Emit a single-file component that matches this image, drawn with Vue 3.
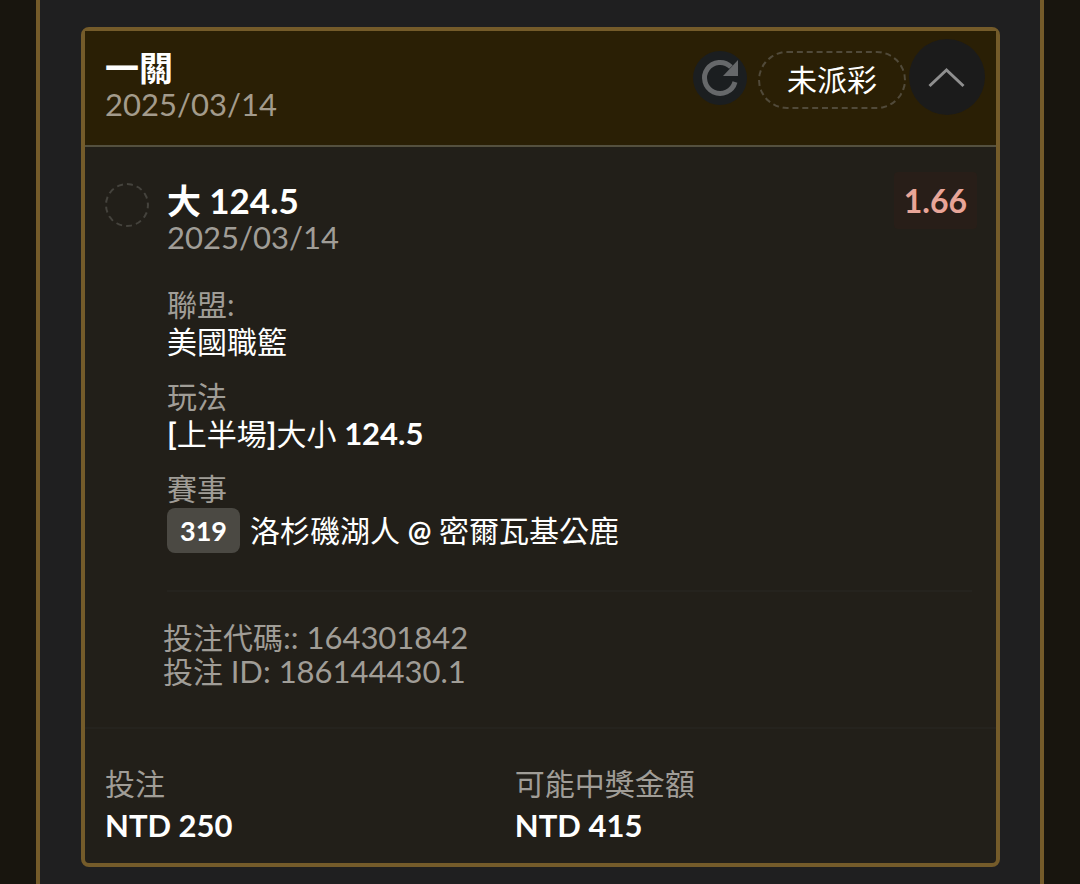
<script setup>
import { ref } from 'vue'

const open = ref(true)

const bet = {
  title: '一關',
  date: '2025/03/14',
  status: '未派彩',
  pick: '大',
  line: '124.5',
  odds: '1.66',
  league: '美國職籃',
  period: '上半場',
  market: '大小',
  gameNo: '319',
  away: '洛杉磯湖人',
  home: '密爾瓦基公鹿',
  code: '164301842',
  id: '186144430.1',
  stake: 'NTD 250',
  payout: 'NTD 415',
}
</script>

<template>
  <main class="page">
    <div class="panel">
      <article class="card">
        <header class="head">
          <div class="heading">
            <h2 class="title">{{ bet.title }}</h2>
            <time class="date">{{ bet.date }}</time>
          </div>
          <div class="tools">
            <button class="refresh" type="button" aria-label="重新整理">
              <svg viewBox="0 0 54 54" width="54" height="54" aria-hidden="true">
                <path d="M42 31A15.500 15.500 0 1 1 38 16" fill="none" stroke="#66686a" stroke-width="5" />
                <path d="M45 9V25H30Z" fill="#66686a" />
              </svg>
            </button>
            <span class="status">{{ bet.status }}</span>
          </div>
          <button class="toggle" type="button" aria-label="收合" :aria-expanded="open" @click="open = !open">
            <svg viewBox="0 0 76 76" width="76" height="76" aria-hidden="true">
              <path d="M20.500 47L37.500 31L54.500 47" fill="none" stroke="#8f8f8f" stroke-width="3" />
            </svg>
          </button>
        </header>

        <section v-if="open" class="body">
          <span class="marker"></span>
          <div class="detail">
            <div class="top">
              <div class="heading">
                <h3 class="title">{{ bet.pick }} <span class="line">{{ bet.line }}</span></h3>
                <time class="date">{{ bet.date }}</time>
              </div>
              <strong class="odds">{{ bet.odds }}</strong>
            </div>

            <dl class="facts">
              <div>
                <dt>聯盟:</dt>
                <dd>{{ bet.league }}</dd>
              </div>
              <div>
                <dt>玩法</dt>
                <dd><b>[</b>{{ bet.period }}<b>]</b>{{ bet.market }} <b>{{ bet.line }}</b></dd>
              </div>
              <div>
                <dt>賽事</dt>
                <dd class="match">
                  <span class="badge">{{ bet.gameNo }}</span>
                  <span>{{ bet.away }} <b class="at">@</b> {{ bet.home }}</span>
                </dd>
              </div>
            </dl>

            <div class="codes">
              <p>投注代碼<span class="num">:: {{ bet.code }}</span></p>
              <p>投注 <span class="num">ID: {{ bet.id }}</span></p>
            </div>
          </div>
        </section>

        <dl class="totals">
          <div>
            <dt>投注</dt>
            <dd>{{ bet.stake }}</dd>
          </div>
          <div>
            <dt>可能中獎金額</dt>
            <dd>{{ bet.payout }}</dd>
          </div>
        </dl>
      </article>
    </div>
  </main>
</template>

<style>
body {
  background: #18150e;
}
</style>

<style scoped>
.page {
  box-sizing: border-box;
  min-height: 100vh;
  display: flex;
  padding: 0 36px;
  background: #18150e;
  color: #fff;
  font-family: Lato, "Noto Sans CJK TC", sans-serif;
  font-size: 30px;
  line-height: 37px;
}
.panel {
  flex: 1;
  border: solid #745b2a;
  border-width: 0 4px;
  padding: 27px 40px 17px 41px;
  background: #1f1f20;
}
.card {
  border: 4px solid #745b2a;
  border-radius: 8px;
  background: #221f19;
}
h2, h3, p, dl, dd {
  margin: 0;
}
button {
  border: 0;
  padding: 0;
  border-radius: 50%;
  cursor: pointer;
}
svg {
  display: block;
}
.head {
  display: flex;
  align-items: flex-start;
  gap: 3px;
  padding: 8px 11px 22px 20px;
  border-bottom: 2px solid #54503f;
  background: #2a1f05;
}
.heading {
  flex: 1;
  padding-top: 10px;
}
.title {
  font-size: 34px;
  line-height: 37px;
  font-weight: 700;
}
.line {
  font-size: 35px;
}
.date {
  display: block;
  font-size: 31px;
  line-height: 37px;
  color: #a09d97;
}
.head .date {
  color: #a39b8c;
}
.tools {
  display: flex;
  align-items: flex-start;
  gap: 11px;
  padding-top: 12px;
}
.refresh {
  background: #1b1e20;
}
.status {
  padding: 7px 27px 9px;
  border: 2px dashed #514a3a;
  border-radius: 29px;
  line-height: 38px;
}
.toggle {
  background: #1b1b1b;
}
.body {
  display: flex;
  gap: 18px;
  padding: 25px 19px 39px 20px;
}
.marker {
  box-sizing: border-box;
  flex: none;
  width: 44px;
  height: 44px;
  margin-top: 11px;
  border: 2px dashed #45433d;
  border-radius: 50%;
}
.detail {
  flex: 1;
}
.top {
  display: flex;
  align-items: flex-start;
}
.odds {
  padding: 10px;
  border-radius: 4px;
  background: #281e18;
  color: #e8a598;
  font-size: 32px;
  line-height: 37px;
}
.facts {
  display: grid;
  gap: 18px;
  margin-right: 5px;
  padding: 30px 0 37px;
  border-bottom: 2px solid #25231e;
}
dt {
  color: #a09d97;
}
.facts b {
  font-size: 31px;
  font-weight: 700;
}
.facts .at {
  font-size: 28px;
}
.match {
  display: flex;
  align-items: center;
  gap: 10px;
  padding-top: 1px;
}
.badge {
  padding: 4px 13px;
  border-radius: 8px;
  background: #4b4943;
  font-size: 27px;
  font-weight: 700;
}
.codes {
  margin: 28px 0 0 -4px;
  line-height: 34px;
  color: #a09d97;
}
.num {
  font-size: 31px;
}
.totals {
  display: grid;
  grid-template-columns: 46% 1fr;
  padding: 33px 0 17px 20px;
  border-top: 2px solid #25231e;
  line-height: 42px;
}
.totals dd {
  font-size: 31px;
  font-weight: 700;
}
</style>
